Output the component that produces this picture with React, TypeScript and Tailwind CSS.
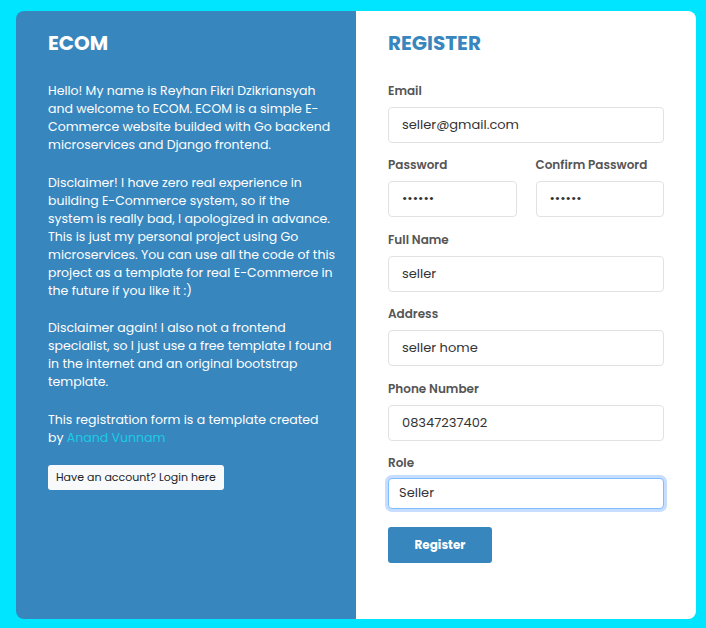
const font = { fontFamily: '"Poppins", "Open Sans", "Noto Sans", sans-serif' };

function Field({ label, value, type = "text", focused = false }: { label: string; value: string; type?: string; focused?: boolean }) {
  return (
    <div className="flex flex-col">
      <label className="text-[12px] font-semibold leading-[18px] text-[#555]">{label}</label>
      <input
        type={type}
        defaultValue={value}
        readOnly
        className={
          focused
            ? "mt-[6px] h-[31px] w-full rounded-[4px] border border-[#80bdff] bg-white px-[10px] text-[13px] text-[#333] outline-none ring-[3px] ring-[#c7ddff]"
            : "mt-[7px] h-[36px] w-full rounded-[4px] border border-[#e2e2e2] bg-white px-[13px] text-[13px] text-[#333] outline-none"
        }
        style={font}
      />
    </div>
  );
}

export default function App() {
  return (
    <div className="min-h-[628px] w-full bg-[#00e5ff] pt-[11px]" style={font}>
      <div className="mx-[16px] flex h-[608px] w-[680px] overflow-hidden rounded-[8px]">
        {/* left info panel */}
        <div className="w-[340px] bg-[#3886be] px-[32px] pt-[17px] text-white">
          <h1 className="text-[20px] font-bold leading-[30px]">ECOM</h1>
          <div className="mt-[24px] flex flex-col gap-[19.6px] text-[12.5px] leading-[18px] whitespace-nowrap">
            <p>
              Hello! My name is Reyhan Fikri Dzikriansyah
              <br />
              and welcome to ECOM. ECOM is a simple E-
              <br />
              Commerce website builded with Go backend
              <br />
              microservices and Django frontend.
            </p>
            <p>
              Disclaimer! I have zero real experience in
              <br />
              building E-Commerce system, so if the
              <br />
              system is really bad, I apologized in advance.
              <br />
              This is just my personal project using Go
              <br />
              microservices. You can use all the code of this
              <br />
              project as a template for real E-Commerce in
              <br />
              the future if you like it :)
            </p>
            <p>
              Disclaimer again! I also not a frontend
              <br />
              specialist, so I just use a free template I found
              <br />
              in the internet and an original bootstrap
              <br />
              template.
            </p>
            <p>
              This registration form is a template created
              <br />
              by <a className="text-[#1ccbe6]">Anand Vunnam</a>
            </p>
          </div>
          <button className="mt-[18px] h-[25px] rounded-[3px] bg-[#f8f9fa] px-[8px] text-[11px] text-[#212529]">
            Have an account? Login here
          </button>
        </div>
        {/* right form panel */}
        <div className="flex-1 bg-white px-[32px] pt-[17px]">
          <h2 className="text-[20px] font-bold leading-[30px] text-[#3886be]">REGISTER</h2>
          <div className="mt-[24px] flex flex-col gap-[13.4px]">
            <Field label="Email" value="seller@gmail.com" />
            <div className="grid grid-cols-2 gap-x-[19px]">
              <Field label="Password" value="123456" type="password" />
              <Field label="Confirm Password" value="123456" type="password" />
            </div>
            <Field label="Full Name" value="seller" />
            <Field label="Address" value="seller home" />
            <Field label="Phone Number" value="08347237402" />
            <Field label="Role" value="Seller" focused />
          </div>
          <button className="mt-[18px] h-[36px] w-[104px] rounded-[3px] bg-[#3886be] text-[12px] font-bold text-white">
            Register
          </button>
        </div>
      </div>
    </div>
  );
}
